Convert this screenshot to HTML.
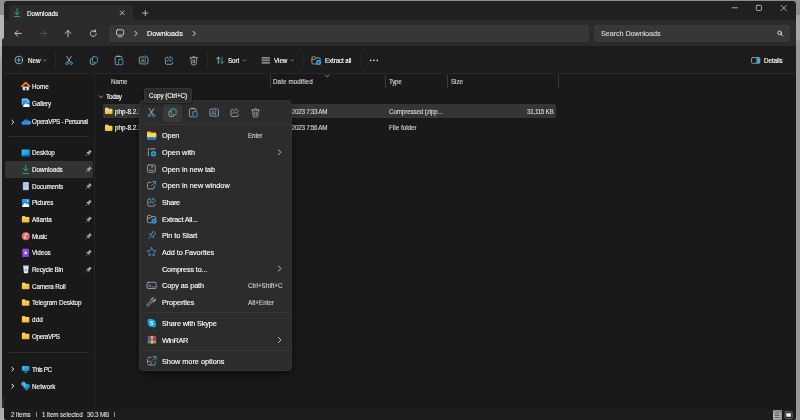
<!DOCTYPE html>
<html lang="en">
<head>
<meta charset="utf-8">
<title>Downloads - File Explorer</title>
<style>
*{box-sizing:border-box;margin:0;padding:0}
html,body{width:800px;height:420px;overflow:hidden}
body{background:#9b9d9f;font-family:"Liberation Sans",sans-serif;color:#fff;font-size:6.3px;position:relative}
.abs{position:absolute}
.t{position:absolute;white-space:nowrap;line-height:10px;height:10px;color:#fff;-webkit-text-stroke:0.12px currentColor;will-change:transform}
svg{position:absolute;overflow:visible}
#bgtop{left:0;top:0;width:800px;height:14.5px;background:#8c8f92}
#bgl{left:0;top:14.5px;width:6px;height:50px;background:linear-gradient(#b4b5b7 0,#b4b5b7 30px,#9b9d9f 50px)}
#bgl2{left:0;top:408px;width:6px;height:12px;background:#aeaeb0}
#bgl3{left:2px;top:397px;width:4px;height:11px;background:#2a2c33}
#bgr{left:794px;top:14.5px;width:6px;height:406px;background:linear-gradient(#a6a8aa 0,#a6a8aa 23px,#98999b 26px)}
#win{left:4px;top:1px;width:792px;height:419px;background:#191919;border-radius:4px 4px 3px 3px}
#winl{left:2px;top:37.5px;width:6px;height:360px;background:linear-gradient(#2b2b2b 0,#2b2b2b 8.5px,#1b1b1b 8.5px);border-radius:2.500px 0 0 0}
#title{left:4px;top:1px;width:792px;height:20px;background:#202020;border-radius:4px 4px 0 0}
#tab{left:9px;top:5px;width:124px;height:16px;background:#2b2b2b;border-radius:3px 3px 0 0}
#tabcurve{left:133px;top:17px;width:3px;height:3px;background:radial-gradient(circle at 100% 0,#202020 2.8px,#2b2b2b 3.2px)}
#nav{left:4px;top:20px;width:792px;height:26px;background:#2b2b2b}
#addr{left:109px;top:25px;width:480px;height:17px;background:#373737;border-radius:2px}
#search{left:594px;top:25px;width:196px;height:17px;background:#373737;border-radius:2px}
#tool{left:4px;top:46px;width:792px;height:28px;background:#1c1c1c;border-bottom:1px solid #262626}
.vsep{position:absolute;width:1px;background:#282828;top:52px;height:16px}
#pane{left:4px;top:74px;width:90px;height:335px;background:#191919}
#divider{left:94px;top:74px;width:1px;height:335px;background:#262626}
#status{left:4px;top:409px;width:792px;height:11px;background:#1c1c1c;border-radius:0 0 3px 3px}
.ssep{position:absolute;top:412.3px;width:1px;height:5px;background:#8a8a8a}
#vb1{left:772.5px;top:410px;width:9.5px;height:10px;background:#5c5c5c;border:0.8px solid #8c8c8c}
#vb2{left:784.5px;top:411px;width:8px;height:8px}
.hsep{position:absolute;height:1px;background:#2e2e2e}
.ms{background:#373737}
#selnav{left:5px;top:161px;width:88px;height:16.5px;background:#333;border-radius:2px}
#selrow{left:102.500px;top:104px;width:453.300px;height:14px;background:#353535;border-radius:1.500px}
.csep{position:absolute;width:1px;background:#3a3a3a;top:75px;height:13px}
#menu{left:139.3px;top:100px;width:152.400px;height:271px;background:#2c2c2c;border:1px solid #323232;border-radius:4px;box-shadow:0 3px 8px rgba(0,0,0,.45)}
#tip{left:144px;top:87.5px;width:48px;height:15.5px;background:#2c2c2c;border:1px solid #343434;border-radius:2px;box-shadow:0 1px 3px rgba(0,0,0,.4)}
#cphl{left:163px;top:104px;width:19px;height:18px;background:#383838;border-radius:2px}
.m{font-size:7.3px}
.k{font-size:6.3px;color:#d0d0d0}
.g{color:#d6d6d6}
.s{color:#dcdcdc}
</style>
</head>
<body>
<div class="abs" id="bgtop"></div>
<div class="abs" id="bgl"></div>
<div class="abs" id="bgl2"></div>
<div class="abs" id="bgl3"></div>
<div class="abs" id="bgr"></div>
<div class="abs" id="winl"></div>
<div class="abs" id="win"></div>
<div class="abs" id="title"></div>
<div class="abs" id="tab"></div>
<div class="abs" id="tabcurve"></div>
<div class="abs" id="nav"></div>
<div class="abs" id="addr"></div>
<div class="abs" id="search"></div>
<div class="abs" id="tool"></div>
<div class="abs" id="pane"></div>
<div class="abs" id="divider"></div>
<div class="abs" id="status"></div>
<!-- WINDOW ICONS -->
<svg width="800" height="420" style="left:0;top:0" fill="none" stroke-linecap="round" stroke-linejoin="round">
<!-- tab download icon -->
<g stroke="#1fb594" stroke-width="0.9"><path d="M17.1 8.7v5.6M14.8 12.2l2.3 2.4 2.3-2.4M14.3 16.4h5.6"/></g>
<!-- tab close / plus -->
<g stroke="#e6e6e6" stroke-width="0.7"><path d="M120.2 10.8l4 4M124.2 10.8l-4 4M142.6 13.1h5.4M145.3 10.4v5.4"/></g>
<!-- window controls -->
<g stroke="#e0e0e0" stroke-width="0.7"><path d="M732.2 7.8h5.4"/><rect x="756.3" y="5.3" width="5.2" height="5.2" rx="0.9"/><path d="M781.1 5.3l5.3 5.3M786.4 5.3l-5.3 5.3"/></g>
<!-- nav arrows -->
<g stroke="#e6e6e6" stroke-width="0.8"><path d="M21.3 33.4h-6.3M17.8 30.6l-2.9 2.8 2.9 2.8"/><path d="M68 36.8v-6.1M65.1 33.4l2.9-2.9 2.9 2.9"/><path d="M96.2 33.6a2.9 2.9 0 1 1-1-2.3M95.6 29.8v1.9h-1.9"/></g>
<g stroke="#5c5c5c" stroke-width="0.8"><path d="M40.2 33.4h6.3M43.6 30.6l2.9 2.8-2.9 2.8"/></g>
<!-- address monitor + chevrons -->
<g stroke="#dcdcdc" stroke-width="0.8"><rect x="116.5" y="29.8" width="7.2" height="5.2" rx="1"/><path d="M118.2 36.8h3.8"/></g><g stroke="#ececec" stroke-width="0.95"><path d="M135 31.4l2.100 2.100-2.100 2.100M193.200 31.400l2.100 2.100-2.100 2.100"/></g>
<!-- search -->
<g stroke="#e6e6e6" stroke-width="0.9"><circle cx="779.6" cy="32.8" r="1.8"/><path d="M781 34.2l1.8 1.8"/></g>
</svg>
<!-- TOOLBAR ICONS -->
<svg width="800" height="420" style="left:0;top:0" fill="none" stroke-linecap="round" stroke-linejoin="round">
<!-- new -->
<circle cx="18.8" cy="60" r="3.8" stroke="#d8d8d8" stroke-width="0.7"/><path d="M16.9 60h3.8M18.8 58.1v3.8" stroke="#4aa8e0" stroke-width="1.1"/>
<!-- chevrons -->
<g stroke="#bdbdbd" stroke-width="0.6"><path d="M43.3 59.8l1.4 1.4 1.4-1.4M243 59.8l1.4 1.4 1.4-1.4M290.8 59.8l1.4 1.4 1.4-1.4"/></g>
<!-- cut -->
<g id="i-cut"><path d="M66.6 56.2l3.9 6M71.4 56.2l-3.9 6" stroke="#dadada" stroke-width="0.7"/><circle cx="66.9" cy="63.3" r="1.3" stroke="#4aa8e0" stroke-width="0.7"/><circle cx="71.1" cy="63.3" r="1.3" stroke="#4aa8e0" stroke-width="0.7"/></g>
<!-- copy -->
<g id="i-copy"><path d="M92.2 58.6h-0.8a1.1 1.1 0 0 0-1.1 1.1v3a1.6 1.6 0 0 0 1.6 1.6h2.2a1.1 1.1 0 0 0 1.1-1.1" stroke="#c4c4c4" stroke-width="0.7"/><rect x="92.500" y="56.800" width="4.900" height="5.800" rx="0.900" stroke="#4aa8e0" stroke-width="0.800"/></g>
<!-- paste -->
<g id="i-paste"><path d="M118 64.6h-1.7a1.1 1.1 0 0 1-1.1-1.1v-5.9a1.1 1.1 0 0 1 1.1-1.1h4.6a1.1 1.1 0 0 1 1.1 1.1v0.9M117.2 56.1h2.8" stroke="#c4c4c4" stroke-width="0.7"/><rect x="118.600" y="59.400" width="4.300" height="5.300" rx="0.800" stroke="#4aa8e0" stroke-width="0.800"/></g>
<!-- rename -->
<g id="i-rename"><path d="M144 56.9h-3.4a1.3 1.3 0 0 0-1.3 1.3v4.4a1.3 1.3 0 0 0 1.3 1.3h3.4M146.4 56.9h0.3a1.3 1.3 0 0 1 1.3 1.3v4.4a1.3 1.3 0 0 1-1.3 1.3h-0.3" stroke="#c4c4c4" stroke-width="0.7"/><path d="M141 62.4l1.6-4 1.6 4M141.6 61.2h2.1M145.2 55.6v9.4" stroke="#4aa8e0" stroke-width="0.7"/></g>
<!-- share -->
<g id="i-share"><path d="M168 57.3h-1.3a1.3 1.3 0 0 0-1.3 1.3v4.4a1.3 1.3 0 0 0 1.3 1.3h4.6a1.3 1.3 0 0 0 1.3-1.3v-0.6" stroke="#c4c4c4" stroke-width="0.7"/><path d="M170.4 56.5l2.8 2.5-2.8 2.5v-1.4c-1.5 0-2.4 0.5-3.1 1.5 0.2-1.9 1.1-3.4 3.1-3.7z" stroke="#4aa8e0" stroke-width="0.7"/></g>
<!-- delete -->
<g id="i-del" stroke="#c4c4c4" stroke-width="0.7"><path d="M190 57.7h7.6M192.6 57.5a1.2 1.2 0 0 1 2.4 0M190.8 57.9l0.7 6a1 1 0 0 0 1 0.9h2.6a1 1 0 0 0 1-0.9l0.7-6M193 59.7v3.2M194.6 59.7v3.2"/></g>
<!-- sort -->
<path d="M218.3 63.4v-6.2M216.4 59.1l1.9-2 1.9 2" stroke="#dadada" stroke-width="0.7"/><path d="M222 57.2v6.2M220.1 61.5l1.9 2 1.9-2" stroke="#4aa8e0" stroke-width="0.7"/>
<!-- view -->
<g fill="#8a8a8a" stroke="none"><rect x="261.6" y="57" width="8.2" height="1.7"/><rect x="261.6" y="59.5" width="8.2" height="1.7"/><rect x="261.6" y="62" width="8.2" height="1.7"/></g>
<!-- extract -->
<path d="M316 64h-3a1.1 1.1 0 0 1-1.1-1.100v-5a1.100 1.100 0 0 1 1.100-1.100h2l1.100 1.100h3a1.100 1.100 0 0 1 1.100 1.100v1M312 59.300h3.300l0.900-1.200" stroke="#c4c4c4" stroke-width="0.7"/><circle cx="318.600" cy="62.400" r="2.600" fill="#2f9ee6" stroke="none"/><path d="M318.500 61.200v2.100M317.600 62.500l0.900 0.900 0.900-0.900" stroke="#10202c" stroke-width="0.5"/>
<!-- dots -->
<g fill="#e6e6e6" stroke="none"><circle cx="370.700" cy="60.400" r="0.800"/><circle cx="374" cy="60.400" r="0.800"/><circle cx="377.300" cy="60.400" r="0.800"/></g>
<!-- details -->
<path d="M756.700 57.500h2a1.100 1.100 0 0 1 1.100 1.100v3.600a1.100 1.100 0 0 1-1.100 1.100h-2z" fill="#3a9bd5" stroke="none"/><rect x="751.500" y="57.500" width="8.300" height="5.800" rx="1.100" stroke="#bdbdbd" stroke-width="0.700"/><path d="M756.600 57.500v5.800" stroke="#3a9bd5" stroke-width="0.6"/>
</svg>

<div class="t" style="left:26.9px;top:8.7px">Downloads</div>
<div class="t m" style="left:146.9px;top:28.9px;letter-spacing:-0.04px">Downloads</div>
<div class="t m g" style="left:601.2px;top:28.9px;letter-spacing:-0.11px">Search Downloads</div>
<div class="t" style="left:27.6px;top:56.0px;letter-spacing:-0.03px">New</div>
<div class="t" style="left:228.4px;top:56.0px;letter-spacing:-0.09px">Sort</div>
<div class="t" style="left:274px;top:56.0px;letter-spacing:-0.04px">View</div>
<div class="t" style="left:324.8px;top:56.0px;letter-spacing:-0.13px">Extract all</div>
<div class="t" style="left:764.2px;top:56.0px;letter-spacing:-0.09px">Details</div>
<div class="vsep" style="left:55px"></div>
<div class="vsep" style="left:207px"></div>
<div class="vsep" style="left:302px"></div>
<div class="vsep" style="left:361px"></div>
<div class="abs" id="selnav"></div>
<div class="hsep" style="left:9px;top:136px;width:80px"></div>
<div class="hsep" style="left:9px;top:352px;width:80px"></div>
<div class="t" style="left:32.2px;top:81.6px;letter-spacing:-0.05px">Home</div>
<div class="t" style="left:32.2px;top:98.9px;letter-spacing:-0.12px">Gallery</div>
<div class="t" style="left:32.2px;top:117.1px;letter-spacing:-0.26px">OperaVPS - Personal</div>
<div class="t" style="left:32.2px;top:148.4px;letter-spacing:-0.04px">Desktop</div>
<div class="t" style="left:32.2px;top:165.1px;letter-spacing:-0.05px">Downloads</div>
<div class="t" style="left:32.2px;top:181.7px;letter-spacing:-0.08px">Documents</div>
<div class="t" style="left:32.2px;top:198.4px;letter-spacing:-0.21px">Pictures</div>
<div class="t" style="left:32.2px;top:215.1px;letter-spacing:0.01px">Atlanta</div>
<div class="t" style="left:32.2px;top:231.8px;letter-spacing:-0.31px">Music</div>
<div class="t" style="left:32.2px;top:248.4px;letter-spacing:-0.08px">Videos</div>
<div class="t" style="left:32.2px;top:265.1px;letter-spacing:-0.20px">Recycle Bin</div>
<div class="t" style="left:32.2px;top:281.8px;letter-spacing:-0.14px">Camera Roll</div>
<div class="t" style="left:32.2px;top:298.4px;letter-spacing:-0.08px">Telegram Desktop</div>
<div class="t" style="left:32.2px;top:315.1px;letter-spacing:0.13px">ddd</div>
<div class="t" style="left:32.2px;top:331.8px;letter-spacing:-0.31px">OperaVPS</div>
<div class="t" style="left:32.2px;top:364.9px;letter-spacing:-0.39px">This PC</div>
<div class="t" style="left:32.2px;top:381.8px;letter-spacing:0.07px">Network</div>
<div class="abs" id="selrow"></div>
<div class="csep" style="left:269.5px"></div>
<div class="csep" style="left:385px"></div>
<div class="csep" style="left:447px"></div>
<div class="csep" style="left:558px"></div>
<div class="t g" style="left:110.5px;top:77.0px;letter-spacing:-0.08px">Name</div>
<div class="t g" style="left:272.7px;top:77.0px;letter-spacing:0.07px">Date modified</div>
<div class="t g" style="left:388.6px;top:77.0px;letter-spacing:-0.30px">Type</div>
<div class="t g" style="left:450.5px;top:77.0px;letter-spacing:-0.09px">Size</div>
<div class="t" style="left:106.2px;top:91.9px;letter-spacing:-0.20px">Today</div>
<div class="t" style="left:115px;top:106.5px">php-8.2.1</div>
<div class="t" style="left:115px;top:123.2px">php-8.2.1</div>
<div class="t g" style="left:276.8px;top:106.5px;letter-spacing:-0.29px">11/11/2023 7:33 AM</div>
<div class="t g" style="left:276.8px;top:123.2px;letter-spacing:-0.29px">11/11/2023 7:56 AM</div>
<div class="t g" style="left:388.6px;top:106.5px;letter-spacing:-0.15px">Compressed (zipp...</div>
<div class="t g" style="left:388.6px;top:123.2px">File folder</div>
<div class="t g" style="left:527.3px;top:106.5px;letter-spacing:-0.29px">31,115 KB</div>
<div class="t s" style="left:10.9px;top:409.9px;letter-spacing:-0.09px">2 items</div>
<div class="t s" style="left:41.7px;top:409.9px;letter-spacing:-0.12px">1 item selected</div>
<div class="t s" style="left:87px;top:409.9px;letter-spacing:-0.21px">30.3 MB</div>
<div class="ssep" style="left:35.5px"></div><div class="ssep" style="left:113.8px"></div>
<div class="abs" id="vb1"></div><div class="abs" id="vb2"></div>
<!-- PANE + LIST ICONS -->
<svg width="800" height="420" style="left:0;top:0" fill="none" stroke-linecap="round" stroke-linejoin="round">
<defs>
<linearGradient id="gd" x1="0" y1="0" x2="1" y2="1"><stop offset="0" stop-color="#35c8f2"/><stop offset="1" stop-color="#0b7fd6"/></linearGradient>
<linearGradient id="gm" x1="0" y1="0" x2="1" y2="1"><stop offset="0" stop-color="#f07a4a"/><stop offset="1" stop-color="#cf5a9a"/></linearGradient>
<linearGradient id="gf" x1="0" y1="0" x2="0" y2="1"><stop offset="0" stop-color="#ffd55e"/><stop offset="1" stop-color="#f2b83a"/></linearGradient>
<linearGradient id="gp" x1="0" y1="0" x2="0" y2="1"><stop offset="0" stop-color="#3aa4f2"/><stop offset="1" stop-color="#1468c8"/></linearGradient>
<linearGradient id="gv" x1="0" y1="0" x2="1" y2="1"><stop offset="0" stop-color="#a25aec"/><stop offset="1" stop-color="#6d3fd0"/></linearGradient>
</defs>
<path d="M22.700 86.400h6.200v3.300a0.600 0.600 0 0 1-0.600 0.600h-5a0.600 0.600 0 0 1-0.600-0.600z" fill="#e9e6e3"/><rect x="24.900" y="87.700" width="1.800" height="2.600" fill="#4a4644"/><path d="M21.800 86.400l3.950-3.800l3.950 3.800" stroke="#f0873a" stroke-width="1.600"/>
<rect x="21.800" y="98.600" width="6.400" height="6.400" rx="1" fill="#8fd0f8"/><rect x="22.600" y="99.800" width="7.200" height="7.200" rx="1.100" fill="url(#gp)"/><path d="M22.900 106.300l2.800-3.200l1.500 1.500l0.900-0.800l1.600 1.900v0.400a0.900 0.900 0 0 1-0.900 0.900h-5a0.900 0.900 0 0 1-0.900-0.700z" fill="#fff"/><circle cx="27.900" cy="101.700" r="0.700" fill="#fff"/>
<g transform="translate(0 122) scale(1 0.84) translate(0 -122)"><path d="M23.600 125.300a2.100 2.100 0 0 1-0.300-4.200a2.900 2.900 0 0 1 5.300-0.600a2.400 2.400 0 0 1 0.500 4.800z" fill="#2b8ff0"/><path d="M23.300 121.100a2.900 2.900 0 0 1 5.300-0.600l-4 2.500z" fill="#1f6fd0" opacity="0.6"/></g>
<path d="M11.90 120.25l1.85 1.85l-1.85 1.85" stroke="#ffffff" stroke-width="1.0"/>
<rect x="21.600" y="149.400" width="8.200" height="6.900" rx="0.700" fill="url(#gd)"/><path d="M21.600 155.200h8.200v0.400a0.700 0.700 0 0 1-0.700 0.700h-6.800a0.700 0.700 0 0 1-0.700-0.700z" fill="#0a5fb0"/>
<g stroke="#1fb594" stroke-width="0.9"><path d="M25.700 165.300v5.500M23.400 168.600l2.300 2.400 2.300-2.400M22.900 173.500h5.600"/></g>
<rect x="22.800" y="182" width="6.100" height="8.300" rx="0.800" fill="#9db7d8"/><rect x="23.700" y="183.200" width="4.300" height="5.800" fill="#c9dcf2"/><path d="M24.400 184.600h2.900M24.400 185.900h2.900M24.400 187.200h2.900" stroke="#7c9cc6" stroke-width="0.500"/>
<rect x="21.900" y="199" width="7.600" height="7.900" rx="1" fill="url(#gp)"/><path d="M22.100 206l2.900-3.300l1.600 1.600l0.900-0.800l1.800 2.100v0.400a0.900 0.900 0 0 1-0.900 0.900h-5.500a0.900 0.900 0 0 1-0.800-0.900z" fill="#fff"/><circle cx="27.500" cy="201" r="0.700" fill="#fff"/>
<path d="M21.90 217.05a0.9 0.9 0 0 1 0.9-0.9h2l0.9 0.9h-3.8z" fill="#e0a52e"/><path d="M21.90 217.05a0.9 0.9 0 0 1 0.9-0.9h2l0.9 0.9h2.9a0.8 0.8 0 0 1 0.8 0.8v3.8a0.8 0.8 0 0 1-0.8 0.8h-6a0.8 0.8 0 0 1-0.8-0.8z" fill="url(#gf)"/>
<circle cx="25.800" cy="236.200" r="4" fill="url(#gm)"/><path d="M25.300 237.800v-3.700l2-0.500v1" stroke="#fff" stroke-width="0.600"/><circle cx="24.700" cy="237.800" r="0.750" fill="#fff"/>
<rect x="22.400" y="248.700" width="6.600" height="8.400" rx="0.900" fill="url(#gv)"/><path d="M24.700 251.200l2.900 1.700l-2.900 1.700z" fill="#fff"/>
<path d="M23.300 266.300h5.300l-0.500 6.200a0.700 0.700 0 0 1-0.700 0.700h-2.900a0.700 0.700 0 0 1-0.700-0.700z" fill="#e8eef4"/><rect x="22.900" y="265.500" width="6.100" height="1" rx="0.400" fill="#cfd8e2"/><path d="M24.800 270.500l1.100-1.900l1.100 1.900z" stroke="#2f8fe0" stroke-width="0.600"/>
<path d="M21.90 283.75a0.9 0.9 0 0 1 0.9-0.9h2l0.9 0.9h-3.8z" fill="#e0a52e"/><path d="M21.90 283.75a0.9 0.9 0 0 1 0.9-0.9h2l0.9 0.9h2.9a0.8 0.8 0 0 1 0.8 0.8v3.8a0.8 0.8 0 0 1-0.8 0.8h-6a0.8 0.8 0 0 1-0.8-0.8z" fill="url(#gf)"/>
<path d="M21.90 300.45a0.9 0.9 0 0 1 0.9-0.9h2l0.9 0.9h-3.8z" fill="#e0a52e"/><path d="M21.90 300.45a0.9 0.9 0 0 1 0.9-0.9h2l0.9 0.9h2.9a0.8 0.8 0 0 1 0.8 0.8v3.8a0.8 0.8 0 0 1-0.8 0.8h-6a0.8 0.8 0 0 1-0.8-0.8z" fill="url(#gf)"/>
<path d="M21.90 317.05a0.9 0.9 0 0 1 0.9-0.9h2l0.9 0.9h-3.8z" fill="#e0a52e"/><path d="M21.90 317.05a0.9 0.9 0 0 1 0.9-0.9h2l0.9 0.9h2.9a0.8 0.8 0 0 1 0.8 0.8v3.8a0.8 0.8 0 0 1-0.8 0.8h-6a0.8 0.8 0 0 1-0.8-0.8z" fill="url(#gf)"/>
<path d="M21.90 333.75a0.9 0.9 0 0 1 0.9-0.9h2l0.9 0.9h-3.8z" fill="#e0a52e"/><path d="M21.90 333.75a0.9 0.9 0 0 1 0.9-0.9h2l0.9 0.9h2.9a0.8 0.8 0 0 1 0.8 0.8v3.8a0.8 0.8 0 0 1-0.8 0.8h-6a0.8 0.8 0 0 1-0.8-0.8z" fill="url(#gf)"/>
<g transform="translate(88.6 152.9) rotate(45)" ><path d="M-1.5 -3h3l-0.5 2.8l1.4 1.4h-4.8l1.4-1.4z" fill="#a6a6a6"/><path d="M0 1.200v2.600" stroke="#a6a6a6" stroke-width="0.6"/></g>
<g transform="translate(88.6 169.57) rotate(45)" ><path d="M-1.5 -3h3l-0.5 2.8l1.4 1.4h-4.8l1.4-1.4z" fill="#a6a6a6"/><path d="M0 1.200v2.600" stroke="#a6a6a6" stroke-width="0.6"/></g>
<g transform="translate(88.6 186.24) rotate(45)" ><path d="M-1.5 -3h3l-0.5 2.8l1.4 1.4h-4.8l1.4-1.4z" fill="#a6a6a6"/><path d="M0 1.200v2.600" stroke="#a6a6a6" stroke-width="0.6"/></g>
<g transform="translate(88.6 202.91000000000003) rotate(45)" ><path d="M-1.5 -3h3l-0.5 2.8l1.4 1.4h-4.8l1.4-1.4z" fill="#a6a6a6"/><path d="M0 1.200v2.600" stroke="#a6a6a6" stroke-width="0.6"/></g>
<g transform="translate(88.6 219.58) rotate(45)" ><path d="M-1.5 -3h3l-0.5 2.8l1.4 1.4h-4.8l1.4-1.4z" fill="#a6a6a6"/><path d="M0 1.200v2.600" stroke="#a6a6a6" stroke-width="0.6"/></g>
<g transform="translate(88.6 236.25) rotate(45)" ><path d="M-1.5 -3h3l-0.5 2.8l1.4 1.4h-4.8l1.4-1.4z" fill="#a6a6a6"/><path d="M0 1.200v2.600" stroke="#a6a6a6" stroke-width="0.6"/></g>
<g transform="translate(88.6 252.92000000000002) rotate(45)" ><path d="M-1.5 -3h3l-0.5 2.8l1.4 1.4h-4.8l1.4-1.4z" fill="#a6a6a6"/><path d="M0 1.200v2.600" stroke="#a6a6a6" stroke-width="0.6"/></g>
<g transform="translate(88.6 269.59000000000003) rotate(45)" ><path d="M-1.5 -3h3l-0.5 2.8l1.4 1.4h-4.8l1.4-1.4z" fill="#a6a6a6"/><path d="M0 1.200v2.600" stroke="#a6a6a6" stroke-width="0.6"/></g>
<rect x="22" y="365.900" width="7.500" height="5" rx="0.600" fill="url(#gd)"/><path d="M24.400 372.200h2.700M25.750 370.900v1.300" stroke="#8aa4b8" stroke-width="0.600"/>
<rect x="23.600" y="384.200" width="6" height="4.200" rx="0.500" fill="url(#gd)"/><path d="M25.300 389.700h2.600M26.600 388.400v1.300" stroke="#8aa4b8" stroke-width="0.600"/><circle cx="23.500" cy="383.900" r="1.900" fill="#2a9df0" stroke="#bfe4ff" stroke-width="0.500"/>
<path d="M11.90 367.25l1.85 1.85l-1.85 1.85" stroke="#ffffff" stroke-width="1.0"/>
<path d="M11.90 384.15l1.85 1.85l-1.85 1.85" stroke="#ffffff" stroke-width="1.0"/>
<path d="M98.900 95.800l2 1.900l2-1.900" stroke="#cfcfcf" stroke-width="0.700"/><path d="M325.200 75l1.950 1.800l1.950-1.800" stroke="#bdbdbd" stroke-width="0.650"/>
<path d="M105.00 108.65a0.9 0.9 0 0 1 0.9-0.9h2l0.9 0.9h-3.8z" fill="#e0a52e"/><path d="M105.00 108.65a0.9 0.9 0 0 1 0.9-0.9h2l0.9 0.9h2.9a0.8 0.8 0 0 1 0.8 0.8v3.8a0.8 0.8 0 0 1-0.8 0.8h-6a0.8 0.8 0 0 1-0.8-0.8z" fill="url(#gf)"/>
<rect x="105.200" y="110.100" width="5.600" height="1.500" fill="#e6e6e6" opacity="0.850"/><path d="M105.600 110.850h5" stroke="#6a6a6a" stroke-width="0.500" stroke-dasharray="0.600 0.600" stroke-linecap="butt"/>
<path d="M105.00 125.65a0.9 0.9 0 0 1 0.9-0.9h2l0.9 0.9h-3.8z" fill="#e0a52e"/><path d="M105.00 125.65a0.9 0.9 0 0 1 0.9-0.9h2l0.9 0.9h2.9a0.8 0.8 0 0 1 0.8 0.8v3.8a0.8 0.8 0 0 1-0.8 0.8h-6a0.8 0.8 0 0 1-0.8-0.8z" fill="url(#gf)"/>
<g stroke="#e2e2e2" stroke-width="0.700"><rect x="774.300" y="412" width="5.900" height="6.600"/><path d="M774.300 414.200h5.900M774.300 416.400h5.900"/></g>
<rect x="785" y="411.800" width="7.200" height="6.800" rx="0.900" stroke="#9a9a9a" stroke-width="0.600"/><rect x="786.300" y="413.200" width="4.600" height="3.600" fill="#f2f2f2"/>
</svg>
<div class="abs" id="menu"></div>
<div class="abs" id="cphl"></div>
<div class="hsep ms" style="left:140px;top:124px;width:151px"></div>
<div class="hsep ms" style="left:141px;top:312px;width:148px"></div>
<div class="hsep ms" style="left:141px;top:350px;width:148px"></div>
<div class="t m" style="left:161.9px;top:131.2px;letter-spacing:-0.14px">Open</div>
<div class="t m" style="left:161.9px;top:147.9px;letter-spacing:0.04px">Open with</div>
<div class="t m" style="left:161.9px;top:164.5px">Open in new tab</div>
<div class="t m" style="left:161.9px;top:181.2px;letter-spacing:0.02px">Open in new window</div>
<div class="t m" style="left:161.9px;top:197.8px;letter-spacing:-0.34px">Share</div>
<div class="t m" style="left:161.9px;top:214.5px;letter-spacing:-0.21px">Extract All...</div>
<div class="t m" style="left:161.9px;top:231.2px;letter-spacing:-0.07px">Pin to Start</div>
<div class="t m" style="left:161.9px;top:247.8px;letter-spacing:-0.07px">Add to Favorites</div>
<div class="t m" style="left:161.9px;top:264.5px;letter-spacing:-0.16px">Compress to...</div>
<div class="t m" style="left:161.9px;top:281.1px;letter-spacing:-0.08px">Copy as path</div>
<div class="t m" style="left:161.9px;top:297.8px;letter-spacing:-0.10px">Properties</div>
<div class="t m" style="left:161.9px;top:319.0px;letter-spacing:-0.13px">Share with Skype</div>
<div class="t m" style="left:161.9px;top:335.6px;letter-spacing:-0.35px">WinRAR</div>
<div class="t m" style="left:161.9px;top:356.8px">Show more options</div>
<div class="t k" style="left:248.3px;top:131.2px;letter-spacing:-0.15px">Enter</div>
<div class="t k" style="left:248.3px;top:281.1px;letter-spacing:0.03px">Ctrl+Shift+C</div>
<div class="t k" style="left:248.3px;top:297.8px">Alt+Enter</div>
<!-- MENU ICONS -->
<svg width="800" height="420" style="left:0;top:0" fill="none" stroke-linecap="round" stroke-linejoin="round">
<g transform="translate(82.50 52.25)"><path d="M66.6 56.2l3.9 6M71.4 56.2l-3.900 6" stroke="#dadada" stroke-width="0.700"/><circle cx="66.900" cy="63.300" r="1.300" stroke="#4aa8e0" stroke-width="0.700"/><circle cx="71.100" cy="63.300" r="1.300" stroke="#4aa8e0" stroke-width="0.700"/></g>
<g transform="translate(78.70 52.25)"><path d="M92.200 58.600h-0.800a1.100 1.100 0 0 0-1.100 1.100v3a1.600 1.600 0 0 0 1.600 1.600h2.200a1.100 1.100 0 0 0 1.100-1.100" stroke="#c4c4c4" stroke-width="0.700"/><rect x="92.500" y="56.800" width="4.900" height="5.800" rx="0.900" stroke="#4aa8e0" stroke-width="0.800"/></g>
<g transform="translate(74.20 52.25)"><path d="M118 64.600h-1.700a1.100 1.100 0 0 1-1.100-1.100v-5.900a1.100 1.100 0 0 1 1.100-1.100h4.600a1.100 1.100 0 0 1 1.100 1.100v0.900M117.200 56.100h2.800" stroke="#c4c4c4" stroke-width="0.700"/><rect x="118.600" y="59.400" width="4.300" height="5.300" rx="0.800" stroke="#4aa8e0" stroke-width="0.800"/></g>
<g transform="translate(70.50 52.25)"><path d="M144 56.900h-3.400a1.300 1.300 0 0 0-1.300 1.300v4.400a1.300 1.300 0 0 0 1.300 1.300h3.400M146.400 56.900h0.300a1.300 1.300 0 0 1 1.300 1.300v4.400a1.300 1.300 0 0 1-1.300 1.300h-0.300" stroke="#c4c4c4" stroke-width="0.700"/><path d="M141 62.400l1.600-4 1.600 4M141.600 61.200h2.100M145.200 55.600v9.400" stroke="#4aa8e0" stroke-width="0.700"/></g>
<g transform="translate(65.60 52.25)"><path d="M168 57.300h-1.300a1.300 1.300 0 0 0-1.300 1.300v4.400a1.300 1.300 0 0 0 1.300 1.300h4.600a1.300 1.300 0 0 0 1.300-1.300v-0.600" stroke="#c4c4c4" stroke-width="0.700"/><path d="M170.400 56.500l2.800 2.500-2.800 2.500v-1.400c-1.500 0-2.400 0.500-3.100 1.500 0.200-1.900 1.100-3.400 3.100-3.700z" stroke="#4aa8e0" stroke-width="0.700"/></g>
<g transform="translate(61.70 52.25)"><g stroke="#c4c4c4" stroke-width="0.700"><path d="M190 57.700h7.600M192.600 57.500a1.200 1.200 0 0 1 2.400 0M190.800 57.900l0.700 6a1 1 0 0 0 1 0.900h2.600a1 1 0 0 0 1-0.900l0.700-6M193 59.700v3.200M194.600 59.700v3.200"/></g></g>
<path d="M147 132.300a0.900 0.900 0 0 1 0.900-0.900h2.500l1 1h3.900a0.900 0.900 0 0 1 0.900 0.900v4.200h-9.200z" fill="#f5bf36"/><path d="M147 133.600h9.200v3.600h-9.200z" fill="#ffd659"/><path d="M147 137.200h9.200v1.600a0.900 0.900 0 0 1-0.900 0.900h-7.400a0.900 0.900 0 0 1-0.900-0.900z" fill="#1e8fe0"/><rect x="150.200" y="137.900" width="2.800" height="0.800" rx="0.400" fill="#0b5cab"/>
<path d="M148.400 148.500v7.200" stroke="#c4c4c4" stroke-width="1.100" stroke-dasharray="1.200 0.700" stroke-linecap="butt"/><path d="M150 148.900h5" stroke="#c4c4c4" stroke-width="0.800"/><circle cx="153.500" cy="153.800" r="2.700" fill="#2f9ee6"/><path d="M152.300 153.800h2.200M153.600 152.800l1 1-1 1" stroke="#10202c" stroke-width="0.500"/>
<rect x="147.500" y="164.900" width="7.800" height="7.400" rx="1.500" stroke="#c4c4c4" stroke-width="0.700"/><path d="M149.300 170.300h4.200" stroke="#c4c4c4" stroke-width="0.700"/><path d="M150.200 168.600l2.600-2.600M150.900 165.900h2v2" stroke="#4aa8e0" stroke-width="0.700"/>
<path d="M150.800 182.300h-1.900a1.300 1.300 0 0 0-1.300 1.300v4a1.300 1.300 0 0 0 1.300 1.300h4a1.300 1.300 0 0 0 1.300-1.300v-1.900" stroke="#c4c4c4" stroke-width="0.700"/><path d="M151.300 185.700l4-4M152.700 181.500h2.800v2.800" stroke="#4aa8e0" stroke-width="0.750"/>
<g transform="translate(-17.60 141.80)"><path d="M168 57.300h-1.300a1.300 1.300 0 0 0-1.300 1.300v4.400a1.300 1.300 0 0 0 1.300 1.300h4.600a1.300 1.300 0 0 0 1.300-1.300v-0.600" stroke="#c4c4c4" stroke-width="0.700"/><path d="M170.400 56.500l2.800 2.500-2.800 2.500v-1.400c-1.500 0-2.400 0.500-3.100 1.500 0.200-1.900 1.100-3.400 3.100-3.700z" stroke="#4aa8e0" stroke-width="0.700"/></g>
<g transform="translate(-164.50 158.70)"><path d="M316 64h-3a1.100 1.100 0 0 1-1.100-1.100v-5a1.100 1.100 0 0 1 1.100-1.100h2l1.100 1.100h3a1.100 1.100 0 0 1 1.100 1.100v1M312 59.300h3.300l0.900-1.200" stroke="#c4c4c4" stroke-width="0.700"/><circle cx="318.600" cy="62.400" r="2.600" fill="#2f9ee6" stroke="none"/><path d="M318.500 61.200v2.100M317.600 62.500l0.900 0.900 0.900-0.900" stroke="#10202c" stroke-width="0.500"/></g>
<g transform="translate(152.100 235.200) rotate(45)" stroke="#4aa8e0" stroke-width="0.700"><path d="M-1.700 -3.800h3.400l-0.500 3.100l1.700 1.600h-5.800l1.700-1.600z"/><path d="M0 0.900v3.900"/></g>
<path d="M151.60 247.60 L152.83 250.60 L156.07 250.85 L153.60 252.95 L154.36 256.10 L151.60 254.40 L148.84 256.10 L149.60 252.95 L147.13 250.85 L150.37 250.60z" stroke="#4aa8e0" stroke-width="0.700"/>
<rect x="147" y="282.300" width="9.200" height="6.200" rx="1.200" stroke="#c4c4c4" stroke-width="0.700"/><path d="M148.600 286.900l1.100-2.800l1.100 2.800M149 286h1.500" stroke="#4aa8e0" stroke-width="0.600"/><path d="M152 286.900h2.500" stroke="#c4c4c4" stroke-width="0.600"/>
<path d="M155.300 299.200a2.300 2.300 0 0 1-3.200 2.600l-3.300 3.800a1 1 0 0 1-1.500-1.400l3.700-3.400a2.300 2.300 0 0 1 2.700-3.100l-1.400 1.500l0.500 1.300l1.300 0.400z" stroke="#c4c4c4" stroke-width="0.700"/>
<circle cx="151.800" cy="323.100" r="3.900" fill="#1ba4ee"/><circle cx="149.800" cy="321.100" r="2.300" fill="#1ba4ee"/><circle cx="153.800" cy="325.100" r="2.300" fill="#1ba4ee"/>
<text x="151.800" y="324.900" font-family="Liberation Sans, sans-serif" font-size="5.200" font-weight="bold" fill="#fff" text-anchor="middle" stroke="none">S</text>
<g stroke="none"><rect x="147.700" y="336" width="4.200" height="2.500" fill="#9a3aa8"/><rect x="151.900" y="336" width="4.200" height="2.500" fill="#d0443a"/><rect x="147.700" y="338.500" width="8.400" height="2.400" fill="#4a62d8"/><rect x="147.700" y="340.900" width="4.200" height="2.500" fill="#4a9e3a"/><rect x="151.900" y="340.900" width="4.200" height="2.500" fill="#e08a2a"/><rect x="150.900" y="335.800" width="2" height="7.800" fill="#e8c23a"/><rect x="151.300" y="338.700" width="1.200" height="2" fill="#8a6a1a"/></g>
<path d="M151 357.300h-2.200a1.300 1.300 0 0 0-1.300 1.300v5.100a1.300 1.300 0 0 0 1.300 1.300h5.100a1.300 1.300 0 0 0 1.300-1.300v-2.200" stroke="#c4c4c4" stroke-width="0.700" stroke-dasharray="3.400 1.500"/><path d="M147.500 361.400h2.600a1 1 0 0 1 1 1v2.600" stroke="#c4c4c4" stroke-width="0.600"/><path d="M152 360.600l3.900-3.900M153.100 356.600h2.900v2.900" stroke="#4aa8e0" stroke-width="0.750"/>
<path d="M278.500 149.80l2.400 2.500l-2.400 2.500" stroke="#e0e0e0" stroke-width="0.800"/>
<path d="M278.500 266.10l2.400 2.500l-2.400 2.500" stroke="#e0e0e0" stroke-width="0.800"/>
<path d="M278.500 337.50l2.400 2.500l-2.400 2.500" stroke="#e0e0e0" stroke-width="0.800"/>
</svg>
<div class="abs" id="tip"></div>
<div class="t" style="left:149px;top:90.6px;letter-spacing:-0.04px">Copy (Ctrl+C)</div>
</body>
</html>
